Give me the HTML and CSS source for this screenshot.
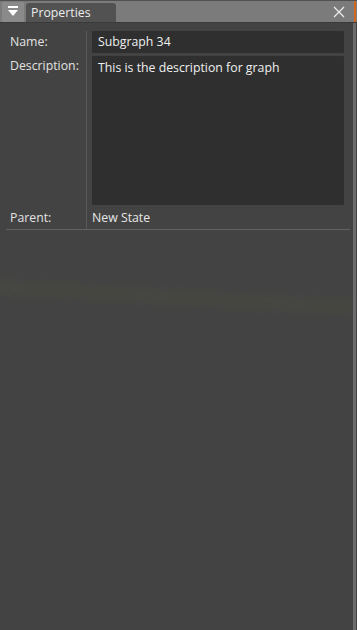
FILE: index.html
```html
<!DOCTYPE html>
<html>
<head>
	<meta charset="utf-8" />
	<title>Properties</title>
	<link rel="stylesheet" href="styles.css">
</head>
<body>
	<div class="panel">
		<div class="titlebar">
			<span class="menu-btn">
				<svg width="11" height="11" viewBox="0 0 11 11">
					<rect x="0" y="0" width="10" height="2" fill="#fff"/>
					<polygon points="0,4 10,4 5,10" fill="#fff"/>
				</svg>
			</span>
			<span class="tab">Properties</span>
			<span class="spacer"></span>
			<span class="close">
				<svg width="12" height="12" viewBox="0 0 12 12">
					<path d="M1 1 L11 11 M11 1 L1 11" stroke="#eee" stroke-width="1.2" fill="none"/>
				</svg>
			</span>
			<span class="grip"></span>
		</div>
		<div class="content">
			<div class="sheet">
				<div class="shine"></div>
				<div class="props">
					<div class="label row-name">Name:</div>
					<div class="value row-name"><div class="field">Subgraph 34</div></div>
					<div class="label row-desc">Description:</div>
					<div class="value row-desc"><div class="field area">This is the description for graph</div></div>
					<div class="label row-parent">Parent:</div>
					<div class="value row-parent plain">New State</div>
				</div>
			</div>
			<div class="scroll"></div>
		</div>
	</div>
</body>
</html>
```

FILE: styles.css
```css
body {
	margin: 0;
	padding: 0;
	background-color: #434343;
	font-family: 'Open Sans', 'Noto Sans', sans-serif;
	font-size: 12.3px;
	color: #e6e6e6;
}
.panel {
	width: 357px;
	height: 630px;
	display: flex;
	flex-direction: column;
	background-color: #434343;
}
.titlebar {
	height: 21px;
	display: flex;
	align-items: stretch;
	background-color: #7b7b7b;
	border-top: 1px solid #505050;
	border-bottom: 1px solid #3a3a3a;
}
.menu-btn {
	width: 22px;
	margin: 1px 2px 0 2px;
	background-color: #8a8a8a;
	display: flex;
	align-items: flex-start;
	justify-content: center;
	padding-top: 4px;
	box-sizing: border-box;
}
.tab {
	width: 90px;
	margin-top: 2px;
	background-color: #525252;
	border-radius: 3px 3px 0 0;
	padding-left: 5px;
	box-sizing: border-box;
	color: #ececec;
	font-size: 12.3px;
	line-height: 20px;
}
.spacer {
	flex: 1;
}
.close {
	width: 12px;
	display: flex;
	align-items: center;
	margin-right: 9px;
}
.grip {
	width: 2px;
	background-color: #d2691e;
	margin-right: 1px;
}
.content {
	flex: 1;
	display: flex;
}
.sheet {
	flex: 1;
	position: relative;
	padding: 8px 3px 0 6px;
	overflow: hidden;
}
.shine {
	position: absolute;
	left: -20px;
	right: -20px;
	top: 268px;
	height: 13px;
	background-color: rgba(80, 80, 60, 0.25);
	transform: rotate(3.3deg);
	filter: blur(3px);
}
.scroll {
	width: 3px;
	background-color: #6c6c6c;
	margin-right: 1px;
}
.props {
	position: relative;
	display: grid;
	grid-template-columns: 81px 1fr;
	grid-template-rows: 25px 149px 24px;
	border-bottom: 1px solid #626262;
}
.label {
	padding-left: 4px;
	border-right: 1px solid #5a5a5a;
	line-height: 16px;
	color: #e2e2e2;
}
.value {
	padding: 0 6px 0 5px;
}
.row-name.label {
	padding-top: 3px;
}
.row-name.value {
	padding-bottom: 3px;
}
.row-desc.label {
	padding-top: 2px;
}
.row-parent {
	padding-top: 5px;
}
.field {
	height: 100%;
	box-sizing: border-box;
	background-color: #2f2f2f;
	border-radius: 1px;
	padding: 3px 6px;
	line-height: 16px;
	color: #f0f0f0;
}
.area {
	padding-top: 4px;
}
.plain {
	color: #e6e6e6;
	line-height: 16px;
}
```
